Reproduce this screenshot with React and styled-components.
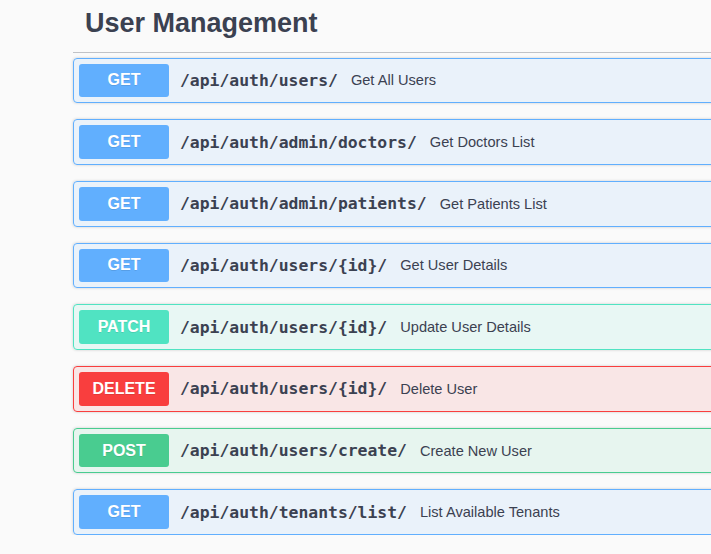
import React from 'react'
import styled, { createGlobalStyle } from 'styled-components'

const methods = {
  get: { color: '#61affe', bg: 'rgba(97,175,254,.1)' },
  patch: { color: '#50e3c2', bg: 'rgba(80,227,194,.1)' },
  delete: { color: '#f93e3e', bg: 'rgba(249,62,62,.1)' },
  post: { color: '#49cc90', bg: 'rgba(73,204,144,.1)' },
}

const endpoints = [
  { method: 'get', path: '/api/auth/users/', summary: 'Get All Users' },
  { method: 'get', path: '/api/auth/admin/doctors/', summary: 'Get Doctors List' },
  { method: 'get', path: '/api/auth/admin/patients/', summary: 'Get Patients List' },
  { method: 'get', path: '/api/auth/users/{id}/', summary: 'Get User Details' },
  { method: 'patch', path: '/api/auth/users/{id}/', summary: 'Update User Details' },
  { method: 'delete', path: '/api/auth/users/{id}/', summary: 'Delete User' },
  { method: 'post', path: '/api/auth/users/create/', summary: 'Create New User' },
  { method: 'get', path: '/api/auth/tenants/list/', summary: 'List Available Tenants' },
]

const App = () => {
  return (
    <>
      <GlobalStyle />
      <Page>
        <Section>
          <TagTitle>User Management</TagTitle>
          <List>
            {endpoints.map((e, i) => (
              <Opblock key={i} $method={e.method}>
                <Method $method={e.method}>{e.method.toUpperCase()}</Method>
                <Path>{e.path}</Path>
                <Summary>{e.summary}</Summary>
              </Opblock>
            ))}
          </List>
        </Section>
      </Page>
    </>
  )
}

const GlobalStyle = createGlobalStyle`
  html, body {
    margin: 0;
    padding: 0;
    background: #fafafa;
    overflow: hidden;
  }
`

const Page = styled.div`
  padding-left: 73px;
  width: 711px;
  box-sizing: border-box;
  overflow: hidden;
  font-family: "Liberation Sans", Arial, sans-serif;
  color: #3b4151;
`

const Section = styled.div`
  width: 700px;
`

const TagTitle = styled.h3`
  margin: 0 0 5px;
  padding: 8.4px 20px 12.2px 12px;
  font-size: 27px;
  font-weight: 700;
  line-height: normal;
  color: #3b4151;
  border-bottom: 1px solid rgba(59, 65, 81, 0.3);
`

const List = styled.div`
  display: flex;
  flex-direction: column;
  gap: 16px;
`

const Opblock = styled.div`
  display: flex;
  align-items: center;
  padding: 5px;
  border: 1px solid ${p => methods[p.$method].color};
  border-radius: 4px;
  background: ${p => methods[p.$method].bg};
  box-shadow: 0 0 3px rgba(0, 0, 0, 0.19);
`

const Method = styled.span`
  flex: none;
  width: 90px;
  height: 33.7px;
  display: flex;
  align-items: center;
  justify-content: center;
  border-radius: 3px;
  background: ${p => methods[p.$method].color};
  color: #fff;
  font-size: 16px;
  font-weight: 700;
  text-shadow: 0 1px 0 rgba(0, 0, 0, 0.1);
`

const Path = styled.span`
  padding: 0 13px 0 11px;
  font-family: "DejaVu Sans Mono", monospace;
  font-size: 16.4px;
  font-weight: 700;
  color: #3b4151;
`

const Summary = styled.span`
  font-size: 14.6px;
  color: #3b4151;
`

export default App
